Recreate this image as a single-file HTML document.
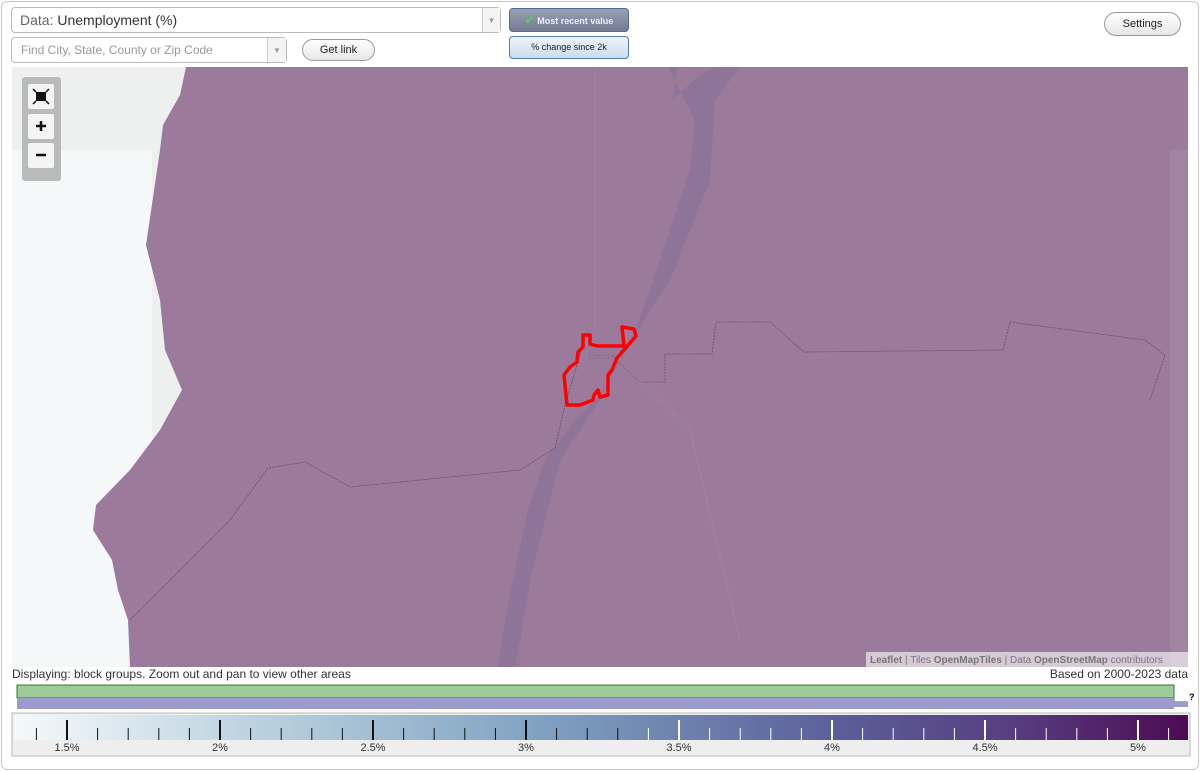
<!DOCTYPE html>
<html><head><meta charset="utf-8"><style>
*{box-sizing:border-box}
body{margin:0;width:1200px;height:771px;background:#fff;font-family:"Liberation Sans",sans-serif;overflow:hidden;position:relative}
.frame{position:absolute;left:1px;top:1px;width:1198px;height:769px;border:1px solid #c8c8c8;border-radius:6px}
.sel{position:absolute;background:#fff;border:1px solid #bbb;border-radius:4px;color:#333}
.arr{position:absolute;right:0;top:0;bottom:0;width:18px;border-left:1px solid #ccc;background:#f4f4f4;color:#999;font-size:8px;text-align:center}
.btn{position:absolute;border:1px solid #999;border-radius:12px;background:linear-gradient(#fff,#e6e6e6);font-size:11px;text-align:center;color:#222}
.tog{position:absolute;border-radius:4px;font-size:9px;text-align:center}
</style></head><body>
<div class="frame"></div>
<div class="sel" style="left:11px;top:7px;width:490px;height:26px;font-size:14px;line-height:25px;padding-left:8px"><span style="color:#666">Data:</span> Unemployment (%)<div class="arr" style="line-height:26px">▼</div></div>
<div class="sel" style="left:11px;top:37px;width:276px;height:26px;font-size:12px;line-height:25px;padding-left:9px;color:#999">Find City, State, County or Zip Code<div class="arr" style="line-height:26px;width:19px">▼</div></div>
<div class="btn" style="left:302px;top:39px;width:73px;height:22px;line-height:20px">Get link</div>
<div class="tog" style="left:509px;top:8px;width:120px;height:24px;line-height:22px;background:linear-gradient(#9aa0b4,#737a92);border:1px solid #4f6d95;color:#eef;font-weight:bold"><span style="color:#5c5;font-size:12px">✔</span> Most recent value</div>
<div class="tog" style="left:509px;top:36px;width:120px;height:23px;line-height:20px;background:linear-gradient(#eef4fa,#c9dcec);border:1px solid #4f7db0;color:#222">% change since 2k</div>
<div class="btn" style="left:1104px;top:12px;width:77px;height:24px;line-height:22px">Settings</div>

<svg style="position:absolute;left:12px;top:67px" width="1176" height="600" viewBox="12 67 1176 600">
<rect x="12" y="67" width="1176" height="600" fill="#eef0f0"/>
<rect x="12" y="150" width="140" height="517" fill="#f4f8f9"/>
<polygon fill="#9b7a9b" points="186,67 1188,67 1188,667 130,667 128,620 118,590 112,560 93,530 96,505 130,470 160,430 182,390 165,350 160,300 146,245 160,150 163,125 180,95"/>
<rect x="1170" y="150" width="18" height="517" fill="#a084a0"/>
<path d="M668,67 L678,67 L672,100 L700,75 L715,67 L740,67 L715,100 L710,180 L690,230 L670,280 L650,310 L630,345 L620,360 L610,375 L600,400 L590,415 L560,460 L545,520 L530,580 L520,640 L515,667 L498,667 L505,620 L515,570 L528,510 L545,460 L575,420 L600,395 L615,370 L630,345 L650,290 L670,230 L690,170 L695,120Z" fill="#8f7499"/>
<g fill="none" stroke="#6d4f6d" stroke-width="0.8" stroke-dasharray="2 1">
<path d="M130,620 L230,520 L268,468 L305,462 L350,487 L520,470 L555,448 L565,405 L583,345"/>
<path d="M612,355 L640,382 L665,382 L665,354 L712,354 L716,322 L770,322 L804,352 L1003,350 L1010,322 L1145,340 L1165,355 L1150,400"/>
</g>
<path d="M595,67 L595,330 M618,360 L690,430 L740,640" stroke="#a48ca2" stroke-width="1" fill="none" opacity="0.6"/>
<text x="588" y="359" font-size="9" fill="#8a6f8a">Ennis</text>
<polygon points="583,335 590,335 590,344 597,346 624,346 622,327 634,329 636,336 617,358 612,370 608,375 608,395 600,397 598,390 594,395 593,400 580,405 567,405 564,375 570,367 577,362 578,352 583,347" fill="none" stroke="#f00" stroke-width="3.5" stroke-linejoin="round"/>
<rect x="866" y="652" width="322" height="15" fill="rgba(255,255,255,0.6)"/>
<text x="870" y="663" font-size="10" fill="#777"><tspan font-weight="bold">Leaflet</tspan> | Tiles <tspan font-weight="bold">OpenMapTiles</tspan> | Data <tspan font-weight="bold">OpenStreetMap</tspan> contributors</text>
<rect x="22" y="77" width="39" height="104" rx="3" fill="#b9bbbb"/>
<rect x="28" y="84" width="26" height="25" rx="2" fill="#f4f4f4"/>
<rect x="28" y="114" width="26" height="25" rx="2" fill="#f4f4f4"/>
<rect x="28" y="143" width="26" height="25" rx="2" fill="#f4f4f4"/>
<rect x="36" y="92" width="10" height="9" fill="#111"/>
<path d="M33,89l3,3M49,89l-3,3M33,104l3,-3M49,104l-3,-3" stroke="#111" stroke-width="1.5"/>
<path d="M36,126h10M41,121v10M36,155h10" stroke="#111" stroke-width="2.5"/>
</svg>

<div style="position:absolute;left:12px;top:667px;font-size:12px;color:#333">Displaying: block groups. Zoom out and pan to view other areas</div>
<div style="position:absolute;right:12px;top:667px;font-size:12px;color:#333">Based on 2000-2023 data</div>
<svg style="position:absolute;left:0;top:680px" width="1200" height="91">
<defs><linearGradient id="g" x1="0" x2="1"><stop offset="0" stop-color="#f5f9fb"/><stop offset="0.2" stop-color="#bcd3e0"/><stop offset="0.45" stop-color="#7fa1c1"/><stop offset="0.7" stop-color="#5b5f99"/><stop offset="0.85" stop-color="#573e81"/><stop offset="1" stop-color="#4c0b52"/></linearGradient></defs>
<rect x="17" y="5" width="1157" height="13" fill="#9ccb98" stroke="#3a7a30" stroke-width="1"/>
<path d="M1174,18 L1174,22 L1188,22" stroke="#3a7a30" fill="none"/>
<text x="1189" y="20" font-size="9" font-weight="bold">?</text>
<rect x="17" y="18" width="1157" height="11" fill="#9b9ccb"/>
<rect x="1174" y="22" width="14" height="5" fill="#9b9ccb"/>
<rect x="12" y="33" width="1178" height="43" fill="#eee" stroke="#bbb"/>
<rect x="14" y="35" width="1174" height="25" fill="url(#g)"/>
<g font-size="11" fill="#333" text-anchor="middle">
<text x="67" y="71">1.5%</text><text x="220" y="71">2%</text><text x="373" y="71">2.5%</text><text x="526" y="71">3%</text><text x="679" y="71">3.5%</text><text x="832" y="71">4%</text><text x="985" y="71">4.5%</text><text x="1138" y="71">5%</text>
</g>
<g id="ticks"></g>
</svg>
<script>
var g=document.getElementById('ticks'),s='';
for(var i=0;i<38;i++){var v=14+i;var x=67+(v-15)*30.6;if(x>1185)break;var maj=(v%5==0);var c=x<630?'#111':'#fff';var y1=maj?40:48;s+='<line x1="'+x+'" x2="'+x+'" y1="'+y1+'" y2="60" stroke="'+c+'" stroke-width="'+(maj?2:1)+'"/>';}
g.innerHTML=s;
</script>
</body></html>
